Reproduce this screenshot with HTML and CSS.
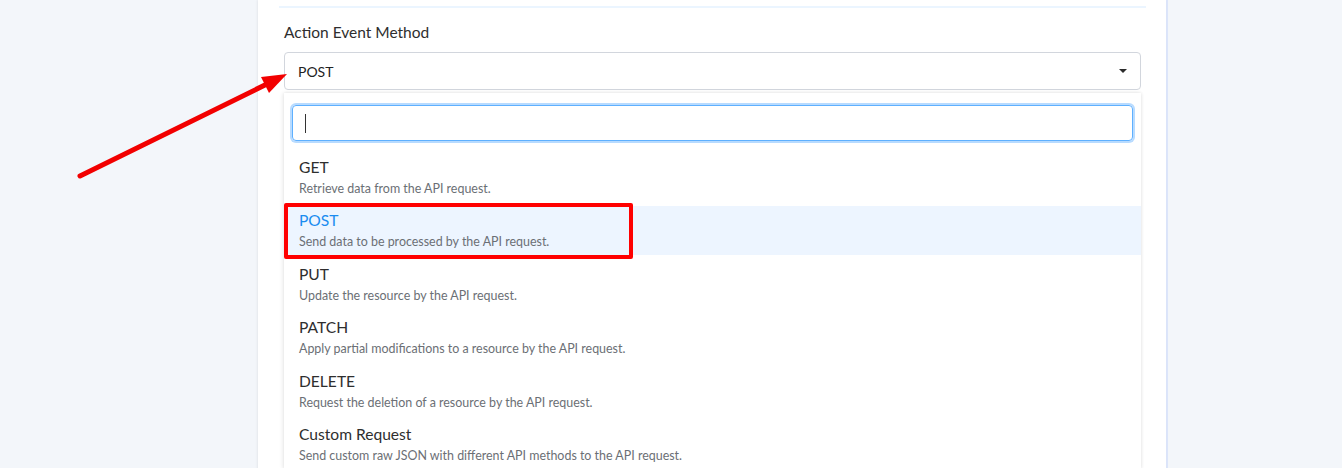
FILE: index.html
```html
<!doctype html>
<html lang="en">
  <head>
    <meta charset="UTF-8" />
    <meta name="viewport" content="width=device-width, initial-scale=1.0" />
    <title>Action Event Method</title>
    <link rel="stylesheet" href="styles.css">
  </head>
  <body>
    <div class="card">
      <div class="divider"></div>
      <div class="field-label">Action Event Method</div>
      <div class="select">
        <span class="select-value">POST</span>
        <span class="caret"></span>
      </div>
      <div class="dropdown">
        <div class="search-wrap">
          <div class="search"><span class="cursor"></span></div>
        </div>
        <ul class="options">
          <li class="option">
            <div class="option-title">GET</div>
            <div class="option-desc">Retrieve data from the API request.</div>
          </li>
          <li class="option active">
            <div class="option-title">POST</div>
            <div class="option-desc">Send data to be processed by the API request.</div>
          </li>
          <li class="option">
            <div class="option-title">PUT</div>
            <div class="option-desc">Update the resource by the API request.</div>
          </li>
          <li class="option">
            <div class="option-title">PATCH</div>
            <div class="option-desc">Apply partial modifications to a resource by the API request.</div>
          </li>
          <li class="option">
            <div class="option-title">DELETE</div>
            <div class="option-desc">Request the deletion of a resource by the API request.</div>
          </li>
          <li class="option">
            <div class="option-title">Custom Request</div>
            <div class="option-desc">Send custom raw JSON with different API methods to the API request.</div>
          </li>
        </ul>
        <div class="highlight-box"></div>
      </div>
    </div>

    <svg class="arrow" width="300" height="200" viewBox="0 0 300 200">
      <line x1="80" y1="176" x2="267" y2="84" stroke="#f20000" stroke-width="5" stroke-linecap="round" />
      <polygon points="287,74 261,77 269,93" fill="#f20000" />
    </svg>
  </body>
</html>
```

FILE: styles.css
```css
html,
body {
  margin: 0;
}
body {
  position: relative;
  height: 468px;
  overflow: hidden;
  background: #f3f6fa;
  font-family: Lato, "Open Sans", sans-serif;
  color: #333;
}
.card {
  margin-left: 258px;
  width: 857px;
  min-height: 468px;
  padding: 6px 25px 0 26px;
  background: #fff;
  box-shadow: -1px 0 2px rgba(0, 0, 0, 0.06), 2px 0 0 #dce5fa;
}
.divider {
  height: 2px;
  margin: 0 -5px;
  background: #ebf5ff;
}
.field-label {
  margin-top: 14px;
  font-size: 15.5px;
  line-height: 20px;
  color: #2e2e2e;
}
.select {
  margin-top: 10px;
  height: 36px;
  border: 1px solid #d2d6dd;
  border-radius: 4px;
  display: flex;
  align-items: center;
  justify-content: space-between;
  padding: 0 13px;
}
.select-value {
  font-size: 14px;
  color: #222;
}
.caret {
  width: 0;
  height: 0;
  border-left: 4px solid transparent;
  border-right: 4px solid transparent;
  border-top: 4px solid #2b2b2b;
}
.dropdown {
  position: relative;
  margin-top: 3px;
  background: #fff;
  box-shadow: -1px 0 4px rgba(0, 0, 0, 0.1), 1px 0 3px rgba(0, 0, 0, 0.06);
  padding-top: 12px;
}
.search-wrap {
  padding: 0 8px;
}
.search {
  height: 34px;
  border: 1px solid #5eb0ff;
  border-radius: 4px;
  box-shadow: 0 0 0 2px #b8dbff;
  display: flex;
  align-items: center;
  padding-left: 12px;
}
.cursor {
  width: 1px;
  height: 19px;
  background: #333;
}
.options {
  list-style: none;
  margin: 12px 0 0;
  padding: 0;
  display: flex;
  flex-direction: column;
  gap: 4.4px;
}
.option {
  height: 49px;
  box-sizing: border-box;
  padding: 4px 15px 0;
}
.option.active {
  background: #edf5ff;
}
.option-title {
  font-size: 15.6px;
  line-height: 20px;
  color: #2e2e2e;
}
.option.active .option-title {
  color: #1a8cf0;
}
.option-desc {
  margin-top: 4px;
  font-size: 12.45px;
  line-height: 16px;
  color: #6b6f75;
}
.highlight-box {
  position: absolute;
  left: 0;
  top: 110px;
  width: 341px;
  height: 48px;
  border: 4px solid #f00;
  border-radius: 2px;
}
.arrow {
  position: absolute;
  left: 0;
  top: 0;
  pointer-events: none;
}
```
